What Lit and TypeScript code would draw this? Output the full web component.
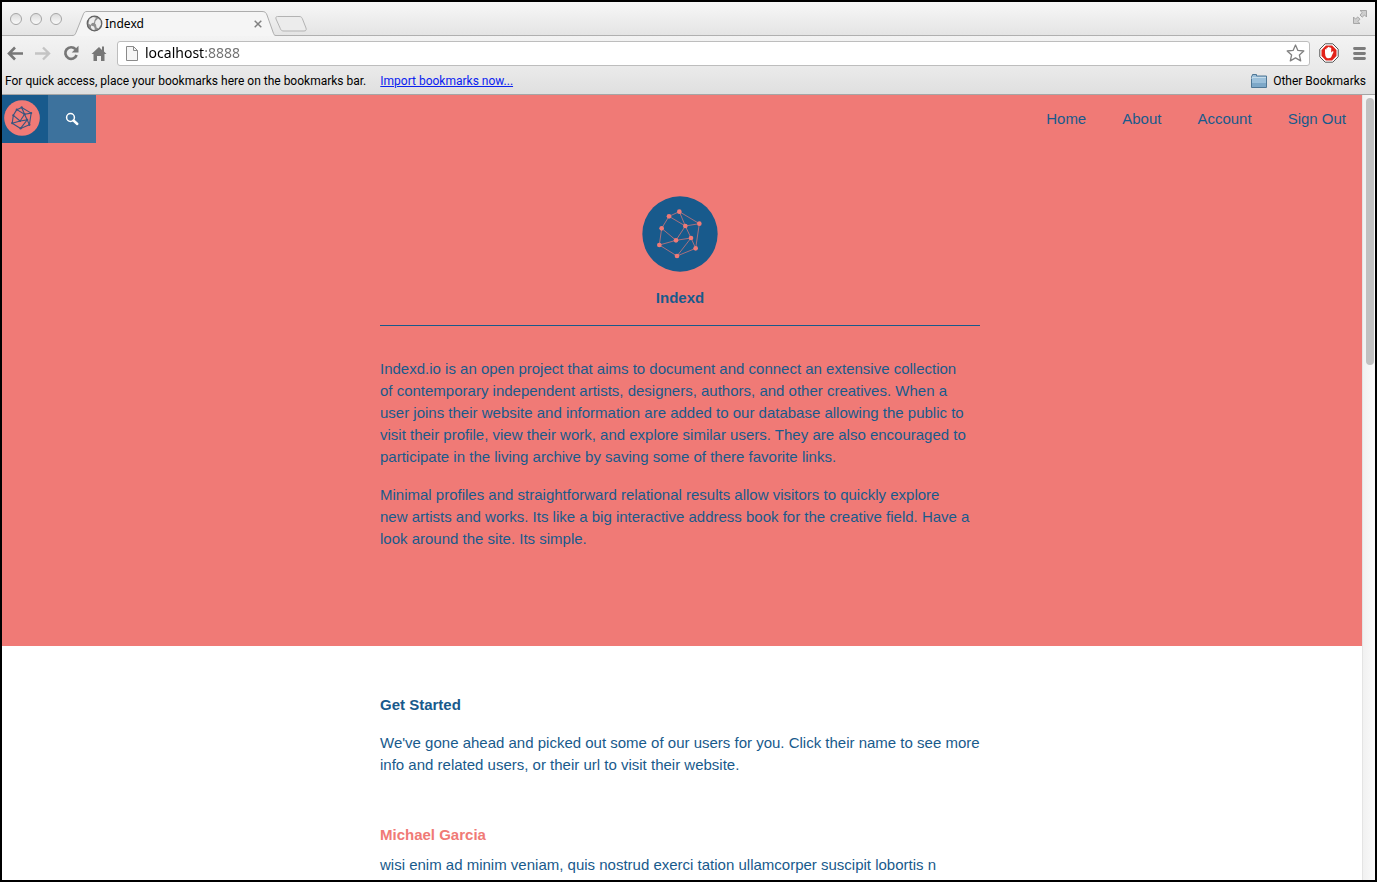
import { LitElement, html, css, svg } from "lit";
import { customElement } from "lit/decorators.js";

const NODES: Record<string, [number, number]> = {
  a: [81, 61],
  b: [112, 47],
  c: [172, 83],
  d: [130, 90],
  e: [59, 97],
  f: [102, 133],
  g: [147, 126],
  h: [52, 147],
  i: [161, 157],
  j: [105, 180],
};
const EDGES = "ab bc ci ij jh he ea ad bd cd df dg fg ef fh gj gi".split(" ");

@customElement("indexd-mark")
export class IndexdMark extends LitElement {
  static styles = css`
    :host {
      display: block;
    }
    .mark {
      display: block;
      width: 100%;
      height: 100%;
    }
    .disc {
      fill: var(--disc);
    }
    .edge {
      stroke: var(--ink);
      stroke-width: var(--edge, 2);
    }
    .node {
      fill: var(--ink);
    }
  `;

  render() {
    return html`<svg class="mark" viewBox="0 0 228 228" aria-hidden="true">
      <circle class="disc" cx="114" cy="114" r="113" />
      ${EDGES.map(([p, q]) => {
        const [x1, y1] = NODES[p];
        const [x2, y2] = NODES[q];
        return svg`<line class="edge" x1=${x1} y1=${y1} x2=${x2} y2=${y2} />`;
      })}
      ${Object.values(NODES).map(([x, y]) => svg`<circle class="node" cx=${x} cy=${y} r="7" />`)}
    </svg>`;
  }
}

@customElement("browser-chrome")
export class BrowserChrome extends LitElement {
  static styles = css`
    :host {
      display: block;
      font-family: "Noto Sans", "Open Sans", sans-serif;
      color: #000;
    }
    svg {
      display: block;
      flex: none;
    }
    button {
      display: block;
      flex: none;
      margin: 0;
      padding: 0;
      border: 0;
      background: none;
      color: inherit;
    }
    .titlebar {
      display: flex;
      align-items: flex-start;
      height: 36px;
      box-sizing: border-box;
      padding: 0 9px 0 10px;
      background: linear-gradient(#f8f8f8, #e4e4e4);
      box-shadow: inset 0 -1px #b0b0b0;
    }
    .lights {
      display: flex;
      gap: 8px;
      padding-top: 13px;
      width: 62px;
    }
    .light {
      width: 12px;
      height: 12px;
      box-sizing: border-box;
      border: 1px solid #a6a6a6;
      border-radius: 50%;
      background: linear-gradient(#dcdcdc, #fafafa);
    }
    .tab {
      display: grid;
      width: 204px;
      height: 25px;
      margin-top: 11px;
    }
    .tab-shape,
    .tab-content {
      grid-area: 1 / 1;
    }
    .tab-content {
      display: flex;
      align-items: center;
      gap: 2px;
      padding: 0 14px;
      font-size: 12px;
      line-height: 16px;
    }
    .tab-title {
      flex: 1;
    }
    .new-tab {
      margin: 15px auto 0 -1px;
    }
    .expand {
      margin-top: 9px;
    }
    .toolbar {
      display: flex;
      align-items: center;
      height: 34px;
      padding: 0 11px 0 7px;
      background: linear-gradient(#f3f3f3, #e9e9e9);
    }
    .nav-buttons {
      display: flex;
      gap: 12px;
      width: 110px;
    }
    .address {
      display: flex;
      flex: 1;
      align-items: center;
      height: 25px;
      box-sizing: border-box;
      margin-right: 9px;
      padding: 0 4px 0 8px;
      border: 1px solid #bdbdbd;
      border-radius: 3px;
      background: #fff;
    }
    .field {
      flex: 1;
      padding-left: 7px;
      font-size: 14px;
      line-height: 20px;
    }
    .url {
      display: block;
      width: 100%;
      padding: 0;
      border: 0;
      outline: 0;
      font: inherit;
      color: transparent;
      caret-color: #000;
      background: linear-gradient(90deg, #000 59px, #6e6e6e 59px);
      -webkit-background-clip: text;
      background-clip: text;
    }
    .menu {
      margin-left: 14px;
    }
    .bookmarks {
      display: flex;
      align-items: center;
      height: 25px;
      box-sizing: border-box;
      padding: 0 11px 2px 5px;
      border-bottom: 1px solid #a5a5a5;
      background: linear-gradient(#e9e9e9, #dfdfdf);
      font-family: Roboto, sans-serif;
      font-size: 12px;
      line-height: 16px;
      white-space: nowrap;
    }
    .import {
      margin: 0 auto 0 14px;
      color: #0a22f0;
    }
    .other {
      display: flex;
      align-items: center;
      gap: 6px;
      font: inherit;
    }
  `;

  render() {
    return html`
      <div class="titlebar">
        <div class="lights">
          <button class="light" aria-label="Close window"></button>
          <button class="light" aria-label="Minimise"></button>
          <button class="light" aria-label="Zoom"></button>
        </div>
        <div class="tab">
          <svg class="tab-shape" width="204" height="25" viewBox="0 0 204 25">
            <path d="M0 24.5c3 0 3-1 4-3L11 4c1-3 2-3.500 4-3.500H190c3 0 4 1 5 3.500l6 17c1 2.500 1 3.500 3 3.500V26H0z" fill="#f5f5f5" />
            <path d="M0 24.500c3 0 3-1 4-3L11 4c1-3 2-3.500 4-3.500H190c3 0 4 1 5 3.500l6 17c1 2.500 1 3.500 3 3.500" fill="none" stroke="#adadad" />
          </svg>
          <div class="tab-content">
            <svg width="17" height="17" viewBox="0 0 17 17">
              <circle cx="8.500" cy="8.500" r="7.300" fill="#8e8e8e" stroke="#626262" stroke-width="1.200" />
              <path d="M3.500 4l3.500-2 3 .8-1.500 2.500-.5 2.500-2 .2-1.500 2-2-1.500zM9.500 6l2.500-2.500 2.500 2 .5 4-2.500 4-2-1-.5-3-1-1zM5 10.500l3 1 1 3-2 .5-2-2z" fill="#ededed" />
            </svg>
            <span class="tab-title">Indexd</span>
            <button aria-label="Close tab">
              <svg width="8" height="8" viewBox="0 0 8 8"><path d="M.7.7l6.600 6.600M7.300.7L.7 7.300" stroke="#808080" stroke-width="1.500" /></svg>
            </button>
          </div>
        </div>
        <button class="new-tab" aria-label="New tab">
          <svg width="32" height="18" viewBox="0 0 32 18">
            <path d="M2.500 1.500H24c2 0 2.500.5 3.300 2l3.700 9.500c.7 2-.2 3-2 3H9c-2 0-3-.5-3.700-2.500L1 4c-.4-1.700 0-2.500 1.500-2.500z" fill="#ececec" stroke="#b3b3b3" />
          </svg>
        </button>
        <button class="expand" aria-label="Full screen">
          <svg width="16" height="16" viewBox="0 0 16 16">
            <path d="M8 1.500h6.500v6.500l-2-2-2.300 2.200-2.200-2.200L10.200 3.500zM1.500 8l2 2L5.800 8 8 10.200 5.800 12.500l2.200 2H1.500z" fill="#cecece" stroke="#a0a0a0" stroke-width=".9" />
          </svg>
        </button>
      </div>
      <div class="toolbar">
        <div class="nav-buttons">
          <button aria-label="Back">
            <svg width="16" height="16" viewBox="0 0 16 16"><path d="M16 8.500H3M8 2.500l-6 6 6 6" fill="none" stroke="#777" stroke-width="2.600" /></svg>
          </button>
          <button aria-label="Forward">
            <svg width="16" height="16" viewBox="0 0 16 16"><path d="M0 8.500h13M8 2.500l6 6-6 6" fill="none" stroke="#c4c4c4" stroke-width="2.400" /></svg>
          </button>
          <button aria-label="Reload">
            <svg width="16" height="16" viewBox="0 0 16 16">
              <path d="M12.500 4.200A5.800 5.800 0 1 0 13.600 10" fill="none" stroke="#777" stroke-width="2.700" />
              <path d="M15.500 .7V7.500H8.700z" fill="#777" />
            </svg>
          </button>
          <button aria-label="Home page">
            <svg width="16" height="16" viewBox="0 0 16 16"><path d="M8 2l3 3V1.500h2v5L15.500 9H13.500v7H10v-5H6v5H2.500V9H.5z" fill="#777" /></svg>
          </button>
        </div>
        <div class="address">
          <svg width="12" height="15" viewBox="0 0 12 15">
            <path d="M.5.5h7l4 4v10H.5z" fill="#f6f6f6" stroke="#8a8a8a" />
            <path d="M7.500.5v4h4" fill="none" stroke="#8a8a8a" />
          </svg>
          <label class="field">
            <input class="url" type="text" aria-label="Address" value="localhost:8888" />
          </label>
          <button aria-label="Bookmark this page">
            <svg width="19" height="18" viewBox="0 0 19 18">
              <path d="M9.500 1l2.400 5.400 5.900.6-4.400 4 1.300 5.900-5.200-3-5.200 3L5.600 11 1.200 7l5.900-.6z" fill="#fff" stroke="#808080" stroke-width="1.300" stroke-linejoin="round" />
            </svg>
          </button>
        </div>
        <button aria-label="Ad blocker">
          <svg width="20" height="20" viewBox="0 0 20 20">
            <path d="M6.200.8h7.600l5.400 5.400v7.600l-5.400 5.400H6.200L.8 13.800V6.200z" fill="#fff" stroke="#555" />
            <path d="M6.900 2.500h6.200l4.400 4.400v6.200l-4.400 4.400H6.900l-4.400-4.400V6.900z" fill="#e2231a" />
            <path d="M6 10V6.500q.8-.8 1.500 0V5q.8-.8 1.500 0V4.200q.9-.8 1.700 0V5q.8-.8 1.500 0v4.500l1.300-1.300q1.200-.3 1 .7L12 14.500q-2 1.500-4.500.2Q6 13 6 10z" fill="#fff" />
          </svg>
        </button>
        <button class="menu" aria-label="Menu">
          <svg width="13" height="14" viewBox="0 0 13 14"><path d="M1.500 2.500h10M1.500 7.500h10M1.500 12.500h10" stroke="#7c7c7c" stroke-width="2.800" stroke-linecap="round" /></svg>
        </button>
      </div>
      <div class="bookmarks">
        <span>For quick access, place your bookmarks here on the bookmarks bar.</span>
        <a class="import" href="#">Import bookmarks now...</a>
        <button class="other">
          <svg width="16" height="14" viewBox="0 0 16 14">
            <path d="M.5 13.500V2.500q0-1 1-1V.5h4v1.500h10v11.500z" fill="#9cc0da" stroke="#4f7795" />
            <path d="M1 5V3.500h14" fill="none" stroke="#c6dcea" />
            <path d="M1 9h14v4H1z" fill="#7da8c8" />
          </svg>
          Other Bookmarks
        </button>
      </div>
    `;
  }
}

@customElement("app-root")
export class AppRoot extends LitElement {
  static styles = css`
    :host {
      --blue: #185a8c;
      --coral: #f07a76;
      display: flex;
      flex-direction: column;
      position: relative;
      height: 100vh;
      overflow: hidden;
      box-sizing: border-box;
      background: #fff;
      color: var(--blue);
      font-family: "Liberation Sans", Arial, sans-serif;
      font-size: 15px;
      line-height: 22px;
    }
    .frame {
      position: absolute;
      inset: 0;
      border: 2px solid #000;
      pointer-events: none;
    }
    .viewport {
      display: flex;
      flex: 1;
      min-height: 0;
      overflow: hidden;
    }
    .page {
      flex: 1;
      min-width: 0;
    }
    .scrollbar {
      width: 15px;
      box-sizing: border-box;
      padding: 3px 3px 0;
      border-left: 1px solid #e4e4e4;
      background: linear-gradient(90deg, #f1f1f1, #fcfcfc);
    }
    .thumb {
      width: 8px;
      height: 267px;
      border-radius: 4px;
      background: #c1c1c1;
    }
    .hero {
      padding: 0 2px 96px 0;
      background: var(--coral);
    }
    .nav {
      display: flex;
      align-items: center;
      height: 48px;
    }
    .home-tile,
    .search-tile {
      display: grid;
      width: 48px;
      height: 48px;
      box-sizing: border-box;
      place-items: center;
      padding: 0;
      border: 0;
    }
    .home-tile {
      padding: 0 4px 2px 0;
      background: var(--blue);
    }
    .search-tile {
      background: #3d729d;
    }
    .small-mark {
      --disc: var(--coral);
      --ink: #37557f;
      --edge: 7;
      width: 36px;
      height: 36px;
    }
    .links {
      display: flex;
      gap: 36px;
      margin: 0 14px 0 auto;
    }
    .link,
    .name {
      color: inherit;
      text-decoration: none;
    }
    .column {
      width: 600px;
      max-width: 100%;
      margin: 0 auto;
    }
    .brand {
      display: grid;
      justify-items: center;
      gap: 15px;
      padding: 53px 0 16px;
      border-bottom: 1px solid var(--blue);
    }
    .big-mark {
      --disc: var(--blue);
      --ink: var(--coral);
      width: 76px;
      height: 76px;
    }
    h1,
    h2,
    h3,
    p {
      margin: 0;
      font-size: inherit;
    }
    .about {
      display: grid;
      gap: 16px;
      padding-top: 32px;
      white-space: nowrap;
    }
    .started {
      padding: 48px 2px 0 0;
      white-space: nowrap;
    }
    .intro {
      margin: 16px 0 48px;
    }
    .name {
      color: var(--coral);
    }
    .bio {
      margin-top: 8px;
    }
  `;

  render() {
    return html`
      <browser-chrome></browser-chrome>
      <div class="viewport">
        <main class="page">
          <section class="hero">
            <nav class="nav">
              <a class="home-tile" href="#" aria-label="Indexd home"><indexd-mark class="small-mark"></indexd-mark></a>
              <button class="search-tile" aria-label="Search">
                <svg width="14" height="14" viewBox="0 0 14 14">
                  <circle cx="5.500" cy="5.500" r="3.900" fill="none" stroke="#fff" stroke-width="1.500" />
                  <path d="M8.500 8.500l3.800 3.500" stroke="#fff" stroke-width="2.400" stroke-linecap="round" />
                </svg>
              </button>
              <div class="links">
                ${["Home", "About", "Account", "Sign Out"].map((t) => html`<a class="link" href="#">${t}</a>`)}
              </div>
            </nav>
            <div class="column">
              <header class="brand">
                <indexd-mark class="big-mark"></indexd-mark>
                <h1>Indexd</h1>
              </header>
              <div class="about">
                <p>
                  Indexd.io is an open project that aims to document and connect an extensive collection<br />
                  of contemporary independent artists, designers, authors, and other creatives. When a<br />
                  user joins their website and information are added to our database allowing the public to<br />
                  visit their profile, view their work, and explore similar users. They are also encouraged to<br />
                  participate in the living archive by saving some of there favorite links.
                </p>
                <p>
                  Minimal profiles and straightforward relational results allow visitors to quickly explore<br />
                  new artists and works. Its like a big interactive address book for the creative field. Have a<br />
                  look around the site. Its simple.
                </p>
              </div>
            </div>
          </section>
          <section class="started">
            <div class="column">
              <h2>Get Started</h2>
              <p class="intro">
                We've gone ahead and picked out some of our users for you. Click their name to see more<br />
                info and related users, or their url to visit their website.
              </p>
              <h3><a class="name" href="#">Michael Garcia</a></h3>
              <p class="bio">wisi enim ad minim veniam, quis nostrud exerci tation ullamcorper suscipit lobortis n</p>
            </div>
          </section>
        </main>
        <div class="scrollbar"><div class="thumb"></div></div>
      </div>
      <div class="frame"></div>
    `;
  }
}
